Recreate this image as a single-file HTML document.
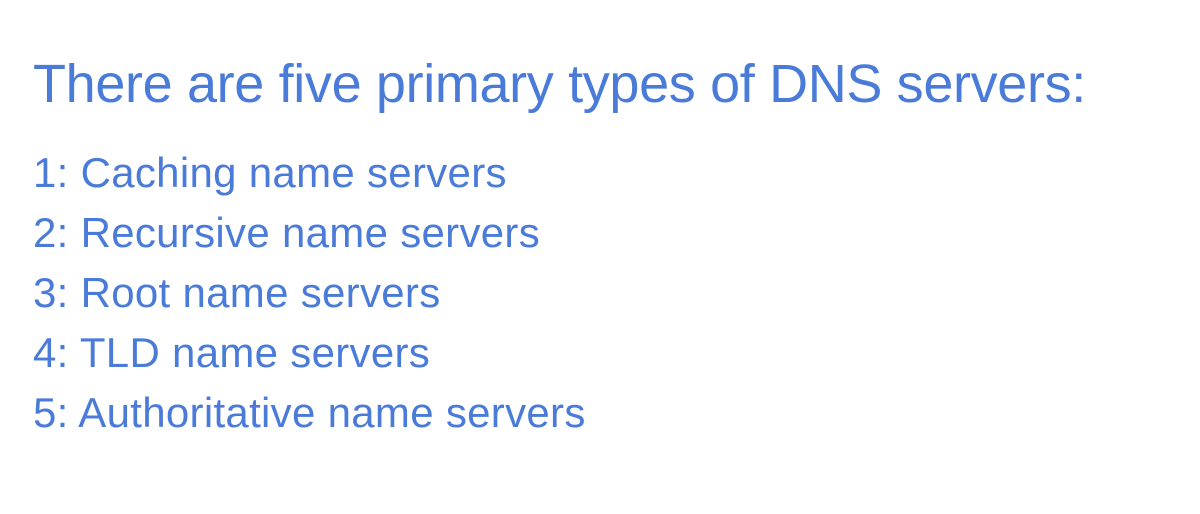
<!DOCTYPE html>
<html><head><style>
body{margin:0;width:1200px;height:514px;background:#fff;overflow:hidden;position:relative;font-family:"Liberation Sans",sans-serif;color:#4a7bd9}
div{position:absolute;left:33px;white-space:nowrap}
.t{top:57px;font-size:54px;line-height:54px;letter-spacing:-0.35px}
.l{font-size:42px;line-height:42px;letter-spacing:0.3px}
</style></head><body>
<div class="t">There are five primary types of DNS servers:</div>
<div class="l" style="top:152px">1: Caching name servers</div>
<div class="l" style="top:212px">2: Recursive name servers</div>
<div class="l" style="top:272px">3: Root name servers</div>
<div class="l" style="top:332px">4: TLD name servers</div>
<div class="l" style="top:392px">5: Authoritative name servers</div>
</body></html>
